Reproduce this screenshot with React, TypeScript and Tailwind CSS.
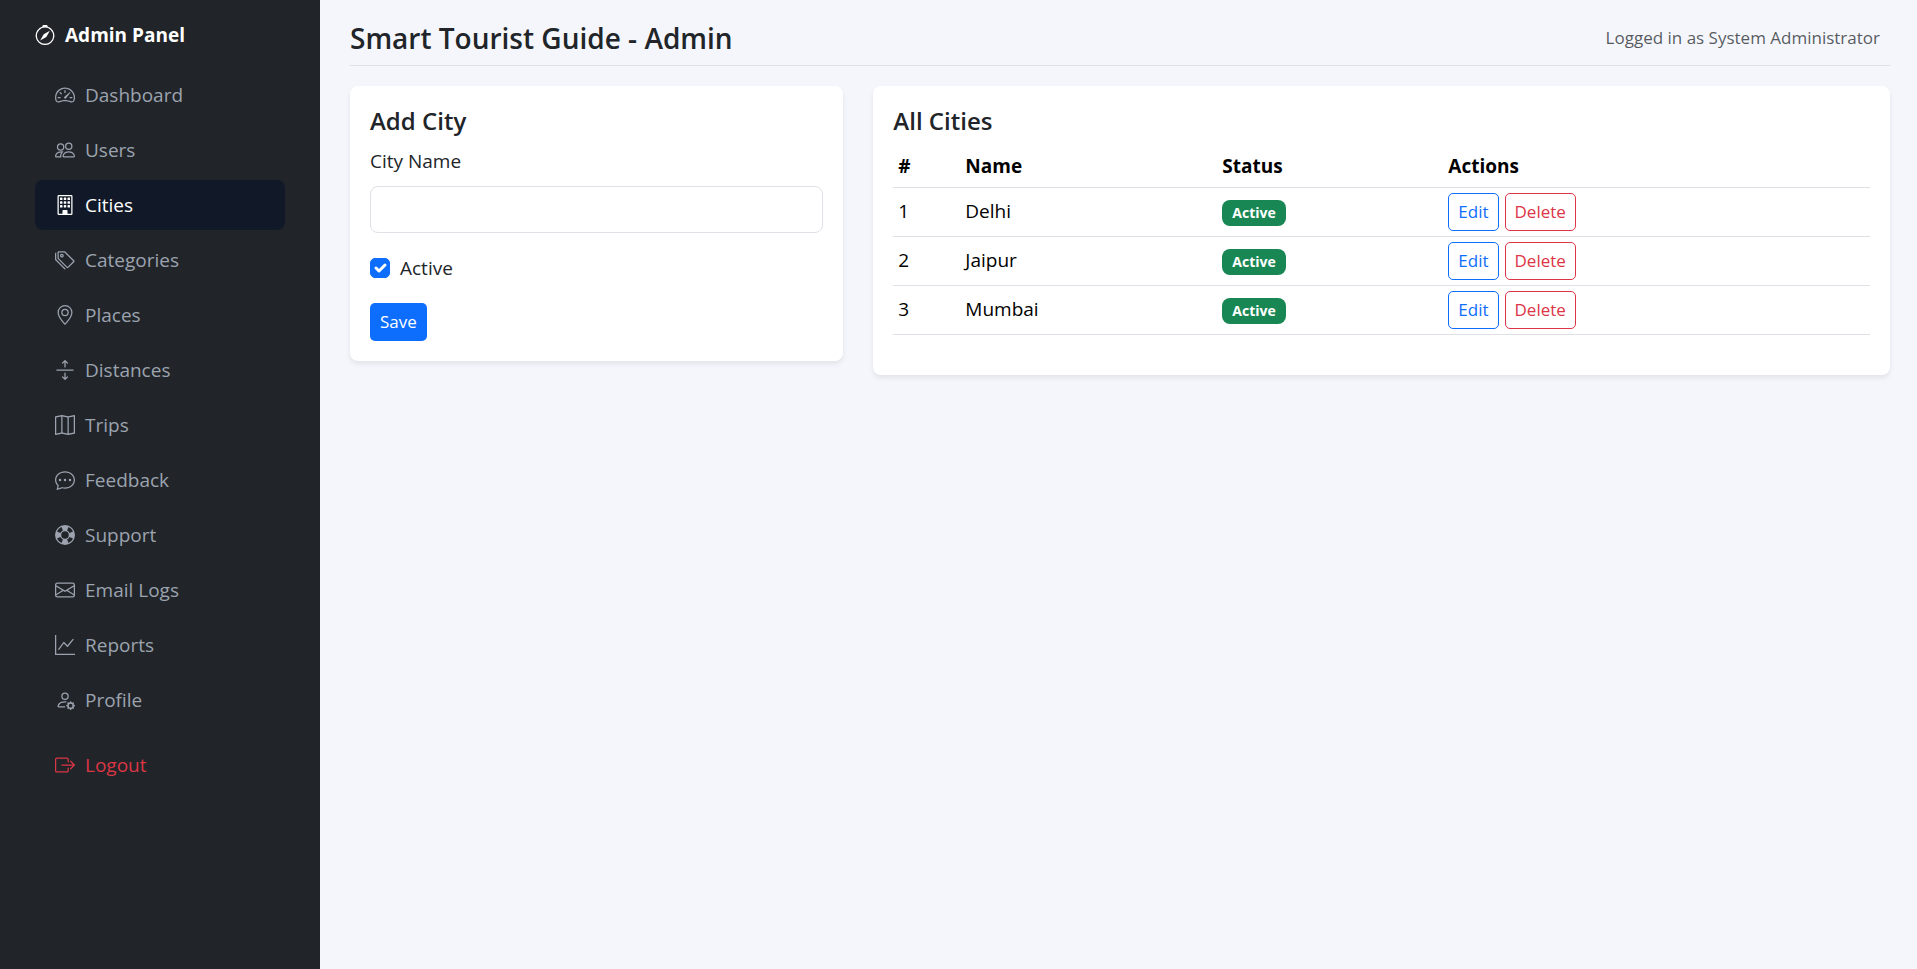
import type { ReactNode } from "react";
import type { IconType } from "react-icons";
import {
  BsArrowsExpand,
  BsBoxArrowRight,
  BsBuilding,
  BsChatDots,
  BsCompass,
  BsEnvelope,
  BsGeoAlt,
  BsGraphUp,
  BsLifePreserver,
  BsMap,
  BsPeople,
  BsPersonGear,
  BsSpeedometer2,
  BsTags,
} from "react-icons/bs";

const navItems: { label: string; icon: IconType }[] = [
  { label: "Dashboard", icon: BsSpeedometer2 },
  { label: "Users", icon: BsPeople },
  { label: "Cities", icon: BsBuilding },
  { label: "Categories", icon: BsTags },
  { label: "Places", icon: BsGeoAlt },
  { label: "Distances", icon: BsArrowsExpand },
  { label: "Trips", icon: BsMap },
  { label: "Feedback", icon: BsChatDots },
  { label: "Support", icon: BsLifePreserver },
  { label: "Email Logs", icon: BsEnvelope },
  { label: "Reports", icon: BsGraphUp },
  { label: "Profile", icon: BsPersonGear },
];

const cities = [
  { id: 1, name: "Delhi", status: "Active" },
  { id: 2, name: "Jaipur", status: "Active" },
  { id: 3, name: "Mumbai", status: "Active" },
];

function Sidebar({ active }: { active: string }) {
  return (
    <aside className="w-80 shrink-0 bg-[#212529] px-[35px] pt-5 text-[19px]">
      <div className="flex h-[30px] items-center gap-[10px] font-bold text-white">
        <BsCompass className="size-5" />
        Admin Panel
      </div>
      <nav className="mt-5 flex flex-col gap-[5px]">
        {navItems.map(({ label, icon: Icon }) => (
          <a
            key={label}
            href="#"
            className={
              label === active
                ? "flex h-[50px] items-center gap-[10px] rounded-lg bg-[#111827] px-5 text-white"
                : "flex h-[50px] items-center gap-[10px] rounded-lg px-5 text-[#9ca3af] hover:text-white"
            }
          >
            <Icon className="size-5" />
            {label}
          </a>
        ))}
        <a
          href="#"
          className="mt-[10px] flex h-[50px] items-center gap-[10px] rounded-lg px-5 text-[#dc3545]"
        >
          <BsBoxArrowRight className="size-5" />
          Logout
        </a>
      </nav>
    </aside>
  );
}

function Card({ title, className, children }: { title: string; className: string; children: ReactNode }) {
  return (
    <section className={`rounded-lg bg-white p-5 shadow-[0_3px_5px_rgba(0,0,0,0.075)] ${className}`}>
      <h2 className="mb-[10px] text-2xl leading-[30px] font-semibold">{title}</h2>
      {children}
    </section>
  );
}

function AddCityForm() {
  return (
    <form onSubmit={(e) => e.preventDefault()} className="text-[19px]">
      <label htmlFor="city-name" className="block leading-[30px]">
        City Name
      </label>
      <input
        id="city-name"
        type="text"
        className="mt-[10px] block h-[47px] w-full rounded-lg border border-[#dee2e6] bg-white px-4 outline-none focus:border-[#86b7fe]"
      />
      <div className="mt-5 flex h-[30px] items-center gap-[10px]">
        <span className="relative size-5">
          <input
            id="city-active"
            type="checkbox"
            defaultChecked
            className="peer block size-5 appearance-none rounded-[5px] border border-[#dee2e6] checked:border-[#0d6efd] checked:bg-[#0d6efd]"
          />
          <svg
            viewBox="0 0 20 20"
            className="pointer-events-none absolute inset-0 hidden size-5 peer-checked:block"
            fill="none"
            stroke="#fff"
            strokeWidth="3"
            strokeLinecap="round"
            strokeLinejoin="round"
          >
            <path d="m6 10 3 3 6-6" />
          </svg>
        </span>
        <label htmlFor="city-active">Active</label>
      </div>
      <button type="submit" className="mt-5 block h-[38px] rounded-[5px] bg-[#0d6efd] px-[10px] text-[17px] text-white">
        Save
      </button>
    </form>
  );
}

function CitiesTable() {
  return (
    <table className="mb-5 w-full table-fixed border-collapse text-left text-[19px] text-black">
      <colgroup>
        <col className="w-[67px]" />
        <col className="w-[257px]" />
        <col className="w-[226px]" />
        <col />
      </colgroup>
      <thead>
        <tr className="h-[41px] border-b border-[#dee2e6]">
          <th className="px-[5px] font-bold">#</th>
          <th className="px-[5px] font-bold">Name</th>
          <th className="px-[5px] font-bold">Status</th>
          <th className="px-[5px] font-bold">Actions</th>
        </tr>
      </thead>
      <tbody>
        {cities.map((city) => (
          <tr key={city.id} className="h-[49px] border-b border-[#dee2e6]">
            <td className="px-[5px]">{city.id}</td>
            <td className="px-[5px]">{city.name}</td>
            <td className="px-[5px] pt-[2px]">
              <span className="flex h-[26px] w-fit items-center rounded-lg bg-[#198754] px-[10px] text-sm font-bold text-white">
                {city.status}
              </span>
            </td>
            <td className="px-[5px]">
              <div className="flex gap-[6px]">
                <button
                  type="button"
                  className="h-[38px] rounded-[5px] border border-[#0d6efd] px-[9px] text-[17px] text-[#0d6efd]"
                >
                  Edit
                </button>
                <button
                  type="button"
                  className="h-[38px] rounded-[5px] border border-[#dc3545] px-[9px] text-[17px] text-[#dc3545]"
                >
                  Delete
                </button>
              </div>
            </td>
          </tr>
        ))}
      </tbody>
    </table>
  );
}

export default function App() {
  return (
    <div className="flex min-h-screen bg-[#f4f6fb] font-['Open_Sans','Noto_Sans',sans-serif] text-[#212529]">
      <Sidebar active="Cities" />
      <main className="min-w-0 flex-1 pt-5 pr-[27px] pl-[30px]">
        <header className="mb-5 flex h-[46px] items-center justify-between border-b border-[#dee2e6] pr-[10px] pb-[10px]">
          <h1 className="text-[28px] font-semibold">Smart Tourist Guide - Admin</h1>
          <span className="text-[17px] text-[#212529]/75">Logged in as System Administrator</span>
        </header>
        <div className="grid grid-cols-12 items-start gap-[30px]">
          <Card title="Add City" className="col-span-4">
            <AddCityForm />
          </Card>
          <Card title="All Cities" className="col-span-8">
            <CitiesTable />
          </Card>
        </div>
      </main>
    </div>
  );
}
